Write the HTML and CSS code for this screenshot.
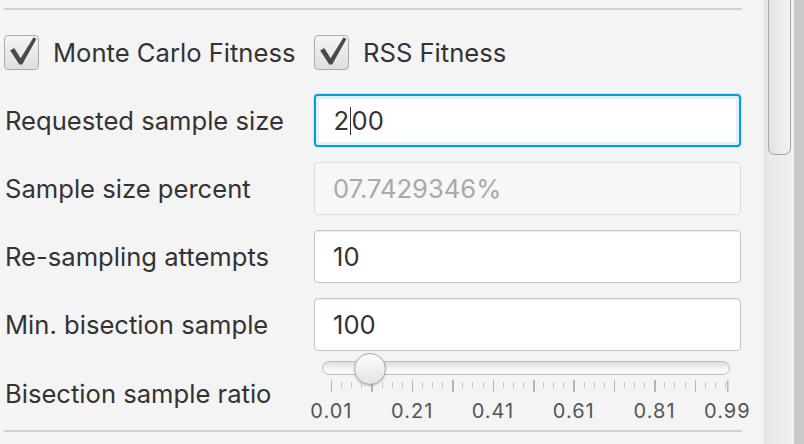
FILE: index.html
```html
<!DOCTYPE html>
<html>
<head>
<meta charset="utf-8">
<link rel="stylesheet" href="styles.css">
</head>
<body>
<div class="window">
  <main class="panel">
    <div class="sep"></div>
    <div class="checks">
      <label class="check">
        <span class="box"><svg viewBox="0 0 35 35" width="35" height="35"><path d="M6.2 16.5 L10.2 14 L16.6 24.3 L29.6 3.2 L32.4 5 L18.2 30.4 L15.3 30.4 Z" fill="#4a4a4a"/></svg></span>
        <span class="check-text">Monte Carlo Fitness</span>
      </label>
      <label class="check">
        <span class="box"><svg viewBox="0 0 35 35" width="35" height="35"><path d="M6.2 16.5 L10.2 14 L16.6 24.3 L29.6 3.2 L32.4 5 L18.2 30.4 L15.3 30.4 Z" fill="#4a4a4a"/></svg></span>
        <span class="check-text">RSS Fitness</span>
      </label>
    </div>
    <div class="form">
      <div class="label">Requested sample size</div>
      <div class="field focused">2<span class="caret"></span>00</div>
      <div class="label">Sample size percent</div>
      <div class="field disabled">07.7429346%</div>
      <div class="label">Re-sampling attempts</div>
      <div class="field">10</div>
      <div class="label">Min. bisection sample</div>
      <div class="field">100</div>
    </div>
    <div class="slider-row">
      <div class="label slider-label">Bisection sample ratio</div>
      <div class="slider">
        <div class="track-wrap">
          <div class="track"></div>
          <div class="thumb"></div>
        </div>
        <div class="ticks"></div>
        <div class="tick-labels">
          <span>0.01</span><span>0.21</span><span>0.41</span><span>0.61</span><span>0.81</span><span>0.99</span>
        </div>
      </div>
    </div>
    <div class="sep bottom"></div>
  </main>
  <div class="scrollbar"><div class="sb-thumb"></div></div>
  <div class="edge"></div>
</div>
</body>
</html>
```

FILE: styles.css
```css
* { box-sizing: border-box; }
html, body {
  margin: 0;
  padding: 0;
  width: 804px;
  height: 444px;
  overflow: hidden;
  background: #f4f4f4;
  font-family: Inter, "Open Sans", sans-serif;
  color: #333333;
}
.window {
  display: flex;
  width: 804px;
  height: 444px;
}
.panel {
  width: 764px;
  flex: none;
  padding-top: 8px;
}
.sep {
  margin-left: 4px;
  width: 738px;
  height: 2px;
  background: #d0d0d0;
}
.sep.bottom {
  margin-top: 7px;
}
.checks {
  display: flex;
  margin-top: 24px;
  padding-left: 4px;
  height: 36px;
  align-items: center;
}
.check {
  display: flex;
  align-items: center;
}
.check:first-child { width: 310px; }
.box {
  width: 35px;
  height: 35px;
  border: 1.5px solid #ababab;
  border-radius: 4px;
  background: linear-gradient(#f5f5f5, #dedede);
  position: relative;
  flex: none;
}
.box svg {
  position: absolute;
  left: -1.5px;
  top: -1.5px;
}
.check-text {
  margin-left: 14px;
  font-size: 25.6px;
}
.form {
  display: grid;
  grid-template-columns: 309px 427px;
  grid-auto-rows: 53px;
  row-gap: 15px;
  margin-top: 24px;
  padding-left: 5px;
}
.label {
  display: flex;
  align-items: center;
  font-size: 25.6px;
}
.field {
  display: flex;
  align-items: center;
  padding-left: 18px;
  font-size: 25.6px;
  background: #ffffff;
  border: 1.5px solid #c3c3c3;
  border-radius: 4px;
  box-shadow: inset 0 2px 2px -1px rgba(0,0,0,0.08);
}
.field.focused {
  border: 2px solid #0b9bd7;
  box-shadow: inset 0 0 0 3px #e1f1f9, 0 0 0 1px rgba(11,155,215,0.18);
  padding-left: 17.5px;
}
.field.disabled {
  background: #f7f7f7;
  border-color: #dcdcdc;
  color: #a9a9a9;
  box-shadow: none;
}
.caret {
  display: inline-block;
  width: 0;
  height: 28px;
  border-left: 1.5px solid #333333;
  margin: 0 0.5px 0 1px;
}
.slider-row {
  display: flex;
  padding-left: 5px;
  margin-top: 2px;
}
.slider-label {
  width: 309px;
  padding-top: 11px;
}
.slider {
  width: 427px;
}
.track-wrap {
  position: relative;
  height: 27px;
  padding-top: 8px;
}
.track {
  margin-left: 8px;
  width: 408px;
  height: 14px;
  border: 1.5px solid #bdbdbd;
  border-radius: 7px;
  background: linear-gradient(#dedede, #f7f7f7 60%, #fbfbfb);
}
.thumb {
  position: absolute;
  left: 40px;
  top: 0;
  width: 32px;
  height: 32px;
  border-radius: 50%;
  border: 1.5px solid #a7a7a7;
  background: linear-gradient(#fcfcfc, #e3e3e3);
  box-shadow: 0 1px 2px rgba(0,0,0,0.22);
  z-index: 2;
}
.ticks {
  margin-left: 16.5px;
  width: 398px;
  height: 12px;
  background:
    linear-gradient(#b4b4b4, #b4b4b4) right top / 1.5px 100% no-repeat,
    repeating-linear-gradient(90deg, #b4b4b4 0 1.5px, transparent 1.5px 40.4px) left top / 100% 100% no-repeat,
    repeating-linear-gradient(90deg, #c6c6c6 0 1px, transparent 1px 10.1px) left 2px / 100% 6px no-repeat;
}
.tick-labels {
  display: grid;
  grid-template-columns: repeat(5, 80.8px) 64.8px;
  margin-left: -23px;
  margin-top: 7px;
  font-size: 20px;
  letter-spacing: 1px;
  color: #555555;
  line-height: 24px;
}
.tick-labels span {
  text-align: center;
}
.scrollbar {
  width: 30px;
  flex: none;
  border-left: 1px solid #e2e2e2;
  background: linear-gradient(90deg, #e7e7e7, #f1f1f1);
  padding-left: 3px;
}
.sb-thumb {
  width: 23px;
  height: 155px;
  border: 1.5px solid #a6a6a6;
  border-top: none;
  border-radius: 0 0 7px 7px;
  background: linear-gradient(90deg, #e3e3e3, #f2f2f2);
}
.edge {
  width: 10px;
  flex: none;
  background: #c9c9c9;
}
```
